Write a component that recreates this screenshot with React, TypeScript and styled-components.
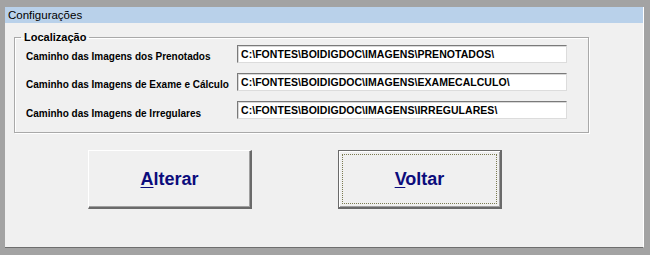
import React from 'react';
import styled, { createGlobalStyle } from 'styled-components';

const GlobalStyle = createGlobalStyle`
  html, body {
    margin: 0;
    padding: 0;
    background: #a3a3a3;
  }
  * { box-sizing: border-box; }
`;

const Frame = styled.div`
  width: 650px;
  height: 255px;
  background: #a3a3a3;
  padding: 7px 6px 7px 5px;
  display: flex;
`;

const Panel = styled.div`
  flex: 1;
  display: flex;
  flex-direction: column;
  background: #f0f0f0;
  border-right: 1px solid #ffffff;
  border-bottom: 1px solid #6e6e6e;
`;

const TitleBar = styled.div`
  height: 16px;
  background: #b9d1ea;
  padding-left: 3px;
  font-family: 'Liberation Sans', Arial, sans-serif;
  font-size: 11.5px;
  line-height: 16px;
  color: #000;
`;

const Group = styled.fieldset`
  margin: 8px 0 0 9px;
  width: 575px;
  height: 102px;
  padding: 2px 0 0 11px;
  border: 1px solid #a9a9a9;
  box-shadow: inset 1px 1px 0 #ffffff, 1px 1px 0 #ffffff;
  display: grid;
  grid-template-columns: 211px 330px;
  grid-auto-rows: 28px;
  align-content: start;
`;

const Legend = styled.legend`
  padding: 0 3px;
  margin-left: -5px;
  font-family: 'Liberation Sans', Arial, sans-serif;
  font-size: 11px;
  font-weight: bold;
  color: #000;
`;

const Label = styled.div<{ $shift?: number }>`
  font-family: 'Liberation Sans', Arial, sans-serif;
  font-size: 10px;
  font-weight: bold;
  color: #000;
  white-space: nowrap;
  display: flex;
  align-items: center;
  height: 18px;
  padding-top: ${p => p.$shift ?? 0}px;
`;

const PathInput = styled.div`
  height: 18px;
  background: #ffffff;
  border-top: 1px solid #7a7a7a;
  border-left: 1px solid #7a7a7a;
  border-right: 1px solid #dcdcdc;
  border-bottom: 1px solid #dcdcdc;
  box-shadow: inset 1px 1px 0 #d8d8d8;
  padding-left: 3px;
  font-family: 'Liberation Sans', Arial, sans-serif;
  font-size: 10.5px;
  letter-spacing: 0.05px;
  font-weight: bold;
  line-height: 16px;
  color: #000;
  white-space: nowrap;
`;

const ButtonRow = styled.div`
  display: flex;
  gap: 86px;
  padding-left: 83px;
  margin-top: 17px;
`;

const Button = styled.button<{ $default?: boolean }>`
  width: 164px;
  height: 59px;
  background: #f0f0f0;
  border: none;
  border-top: 1px solid ${p => (p.$default ? '#6a6a6a' : '#ffffff')};
  border-left: 1px solid ${p => (p.$default ? '#6a6a6a' : '#ffffff')};
  border-right: 2px solid #6a6a6a;
  border-bottom: 2px solid #6a6a6a;
  box-shadow: ${p =>
    p.$default
      ? 'inset 1px 1px 0 #ffffff, inset -1px -1px 0 #a0a0a0'
      : 'inset -1px -1px 0 #a0a0a0'};
  font-family: 'Liberation Sans', Arial, sans-serif;
  font-size: 18px;
  font-weight: bold;
  color: #0c0c7c;
  padding: 0;
  position: relative;
  cursor: default;
`;

const Focus = styled.span`
  position: absolute;
  inset: 3px;
  border: 1px dotted #7a7a50;
  pointer-events: none;
`;

const Key = styled.span`
  text-decoration: underline;
  text-underline-offset: 2px;
`;

const paths = [
  { label: 'Caminho das Imagens dos Prenotados', value: 'C:\\FONTES\\BOIDIGDOC\\IMAGENS\\PRENOTADOS\\', shift: 4 },
  { label: 'Caminho das Imagens de Exame e Cálculo', value: 'C:\\FONTES\\BOIDIGDOC\\IMAGENS\\EXAMECALCULO\\', shift: 4 },
  { label: 'Caminho das Imagens de Irregulares', value: 'C:\\FONTES\\BOIDIGDOC\\IMAGENS\\IRREGULARES\\', shift: 6 },
];

export default function App() {
  return (
    <>
      <GlobalStyle />
      <Frame>
        <Panel>
          <TitleBar>Configurações</TitleBar>
          <Group>
            <Legend>Localização</Legend>
            {paths.map(p => (
              <React.Fragment key={p.label}>
                <Label $shift={p.shift}>{p.label}</Label>
                <PathInput>{p.value}</PathInput>
              </React.Fragment>
            ))}
          </Group>
          <ButtonRow>
            <Button>
              <Key>A</Key>lterar
            </Button>
            <Button $default>
              <Focus />
              <Key>V</Key>oltar
            </Button>
          </ButtonRow>
        </Panel>
      </Frame>
    </>
  );
}
